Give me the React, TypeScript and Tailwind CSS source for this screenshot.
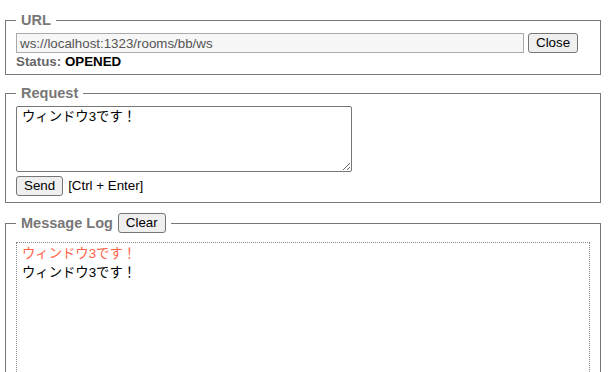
const font = { fontFamily: '"Liberation Sans", "Noto Sans CJK JP", Arial, sans-serif' };

const btn =
	"h-[20px] px-[7px] text-[13.33px] leading-none text-black bg-[#efefef] border border-[#767676] rounded-[3px]";

export default function App() {
	const message = "ウィンドウ3です！";

	return (
		<div style={font} className="w-[615px] h-[372px] overflow-hidden bg-white pt-[12px] text-[13.33px] text-black">
			<fieldset className="ml-[5px] w-[596px] border border-[#777] px-[10px] pb-[5px] pt-[5px]">
				<legend className="px-[5px] text-[14.5px] font-bold text-[#777] leading-[16px]">URL</legend>
				<div className="flex items-center gap-[4px]">
					<input
						readOnly
						value="ws://localhost:1323/rooms/bb/ws"
						className="w-[508px] h-[20px] px-[3px] text-[13.33px] text-[#545454] bg-[#f7f7f7] border border-[#aaa] outline-none"
					/>
					<button type="button" className={btn}>
						Close
					</button>
				</div>
				<div className="leading-[15px] mt-[1px] font-bold">
					<span className="text-[#666]">Status: </span>
					<span>OPENED</span>
				</div>
			</fieldset>

			<fieldset className="ml-[5px] mt-[10px] w-[596px] border border-[#777] px-[10px] pb-[6px] pt-[5px]">
				<legend className="px-[5px] text-[14.5px] font-bold text-[#777] leading-[16px]">Request</legend>
				<textarea
					defaultValue={message}
					className="block w-[336px] h-[66px] p-[2px] px-[5px] text-[13.33px] leading-[16px] border border-[#767676] rounded-[2px] outline-none"
				/>
				<div className="flex items-center gap-[5px] mt-[4px]">
					<button type="button" className={btn}>
						Send
					</button>
					<span>[Ctrl + Enter]</span>
				</div>
			</fieldset>

			<fieldset className="ml-[5px] mt-[10px] w-[596px] h-[200px] border border-[#777] px-[10px] pt-[9px]">
				<legend className="px-[5px] flex items-center gap-[5px] text-[14.5px] font-bold text-[#777] leading-[20px]">
					<span>Message Log</span>
					<button type="button" className={`${btn} font-normal`}>
						Clear
					</button>
				</legend>
				<div className="h-[200px] border border-dotted border-[#888] px-[5px] pt-[1px] leading-[19px]">
					<div className="text-[#ff6347]">{message}</div>
					<div>{message}</div>
				</div>
			</fieldset>
		</div>
	);
}
